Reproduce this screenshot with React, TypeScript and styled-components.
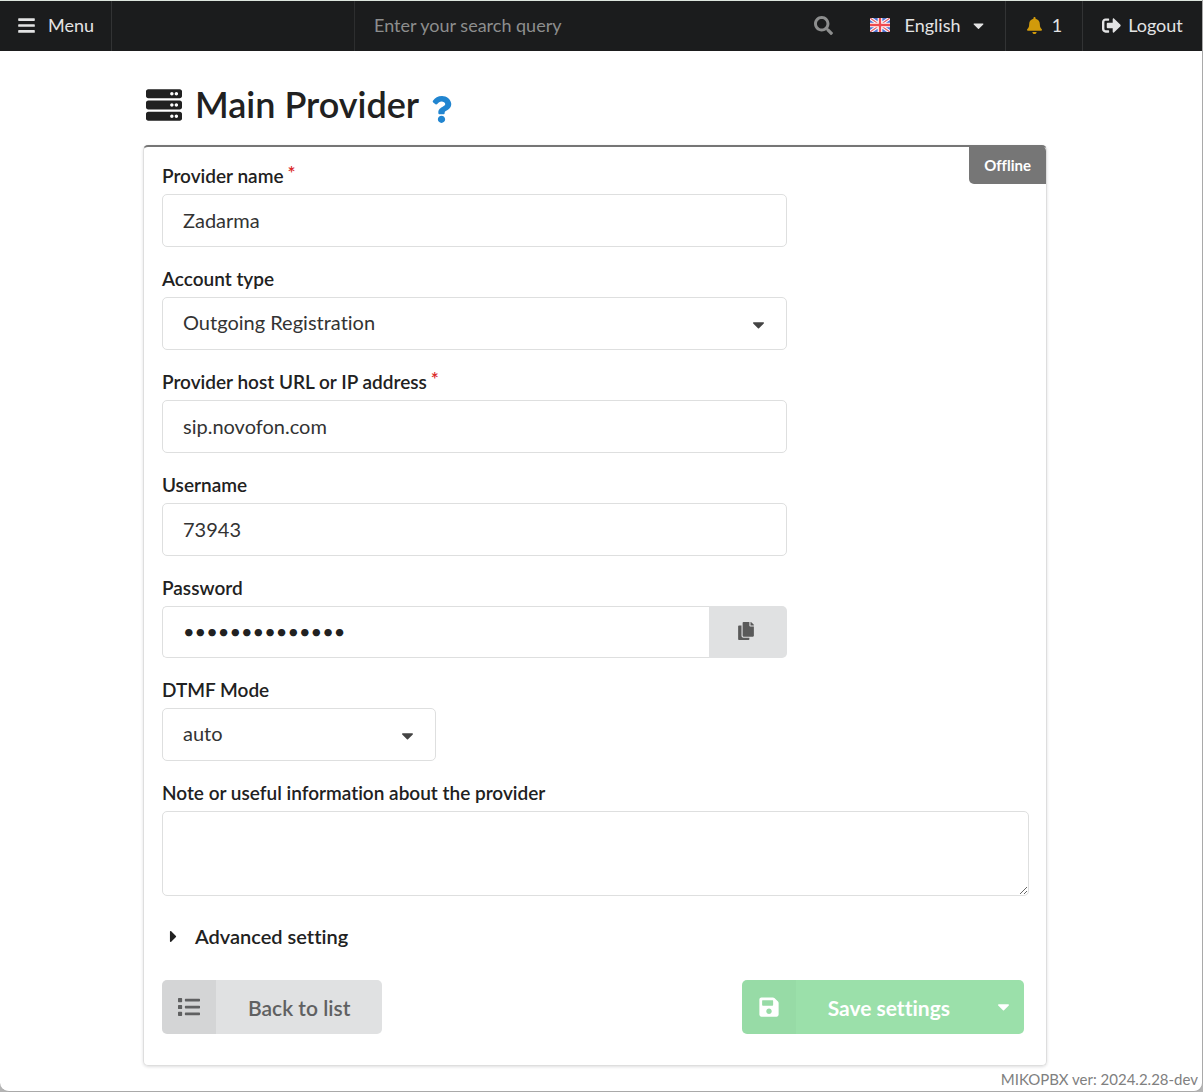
import React from "react";
import styled, { createGlobalStyle } from "styled-components";
import {
  FaBars,
  FaBell,
  FaCaretDown,
  FaCaretRight,
  FaCopy,
  FaList,
  FaQuestion,
  FaSave,
  FaSearch,
  FaServer,
  FaSignOutAlt,
} from "react-icons/fa";

const GlobalStyle = createGlobalStyle`
  *, *::before, *::after { box-sizing: border-box; }
  body {
    margin: 0;
    background: #b4b4b4;
    color: #212121;
    font-family: Lato, "Liberation Sans", sans-serif;
    font-size: 20px;
    font-variant-ligatures: none;
  }
  button, input, select, textarea { font: inherit; font-variant-ligatures: none; color: inherit; margin: 0; }
  svg { display: block; flex: none; }
`;

const Page = styled.div`
  display: flex;
  flex-direction: column;
  min-height: 100vh;
  background: #fff;
  border: solid #a9a9a9;
  border-width: 0 1px 1px 0;
  border-radius: 0 0 9px 9px;
`;

const TopBar = styled.nav`
  display: flex;
  height: 51px;
  border-top: 1px solid #dde5dd;
  background: #1b1c1d;
  color: #e3e3e4;
  font-size: 18px;
`;

const NavButton = styled.button<{ $width: number; $gap: number; $divided?: boolean }>`
  display: flex;
  align-items: center;
  justify-content: center;
  gap: ${(p) => p.$gap}px;
  width: ${(p) => p.$width}px;
  padding: 0 0 2px;
  border: 0;
  border-right: ${(p) => (p.$divided ? "1px solid #323334" : "0")};
  background: none;
  cursor: pointer;
`;

const NavSpacer = styled.div`
  width: 243px;
  border-right: 1px solid #2d2e2f;
`;

const SearchBox = styled.label`
  display: flex;
  flex: 1;
  align-items: center;
  padding: 0 19px 2px;
  color: #8d8e8e;
`;

const SearchInput = styled.input`
  flex: 1;
  min-width: 0;
  padding: 0;
  border: 0;
  outline: 0;
  background: none;
  &::placeholder { color: #8d8e8e; opacity: 1; }
`;

const FlagIcon = styled.svg`
  margin-right: 5px;
`;

const Main = styled.main`
  width: 100%;
  padding: 30px 155px 0 143px;
`;

const Heading = styled.header`
  display: flex;
  align-items: center;
  height: 48px;
  padding-left: 3px;
  gap: 13px;
`;

const Title = styled.h1`
  margin: 0;
  padding-bottom: 2px;
  font-size: 36px;
  line-height: 46px;
  font-weight: 600;
`;

const HelpLink = styled.a`
  margin-left: -4px;
  padding-top: 8px;
  color: #2185d0;
`;

const Card = styled.section`
  margin-top: 16px;
  padding: 17px 17px 31px 18px;
  border: 1px solid #dedede;
  border-top: 2px solid #767676;
  border-radius: 5px;
  box-shadow: 0 1px 3px rgba(34, 36, 38, 0.15);
  position: relative;
`;

const StatusBadge = styled.span`
  position: absolute;
  top: -1px;
  right: 0;
  padding: 9px 15px;
  border-radius: 0 5px 0 5px;
  background: #767676;
  color: #fff;
  font-size: 15px;
  line-height: 20px;
  font-weight: 700;
`;

const Form = styled.form`
  display: flex;
  flex-direction: column;
  gap: 20px;
`;

const Field = styled.div<{ $maxWidth?: string }>`
  display: flex;
  flex-direction: column;
  width: 100%;
  max-width: ${(p) => p.$maxWidth ?? "625px"};
`;

const Label = styled.label`
  height: 30px;
  font-size: 19px;
  line-height: 24px;
  font-weight: 600;
`;

const Required = styled.span`
  margin-left: 4px;
  color: #db2828;
  line-height: 18px;
  vertical-align: top;
`;

const TextInput = styled.input`
  width: 100%;
  height: 53px;
  padding: 0 20px 2px;
  border: 1px solid #dedfdf;
  border-radius: 5px;
  outline: 0;
  background: #fff;
  color: #333;
`;

const SelectBox = styled.div`
  position: relative;
`;

const Select = styled.select`
  width: 100%;
  height: 53px;
  padding: 0 50px 4px 20px;
  border: 1px solid #dedfdf;
  border-radius: 5px;
  outline: 0;
  background: #fff;
  color: #333;
  appearance: none;
`;

const SelectCaret = styled(FaCaretDown)`
  position: absolute;
  right: 19px;
  top: 18px;
  color: #444;
  pointer-events: none;
`;

const ActionInput = styled.div`
  display: flex;
  height: 52px;
`;

const PasswordInput = styled(TextInput)`
  flex: 1;
  height: 52px;
  border-right: 0;
  border-radius: 5px 0 0 5px;
  color: #212121;
`;

const CopyButton = styled.button`
  display: flex;
  align-items: center;
  justify-content: center;
  width: 78px;
  padding: 0 4px 2px 0;
  border: 0;
  border-radius: 0 5px 5px 0;
  background: #e0e1e2;
  color: #5a5a5a;
`;

const NoteArea = styled.textarea`
  display: block;
  width: 100%;
  height: 85px;
  padding: 14px 20px;
  border: 1px solid #dedfdf;
  border-radius: 5px;
  outline: 0;
  resize: vertical;
`;

const AdvancedToggle = styled.button`
  display: flex;
  align-items: center;
  align-self: flex-start;
  gap: 12px;
  height: 44px;
  padding: 0 0 4px 2px;
  border: 0;
  background: none;
  font-weight: 600;
`;

const Actions = styled.div`
  display: flex;
  justify-content: space-between;
  padding-right: 5px;
`;

const ActionButton = styled.button<{ $primary?: boolean }>`
  display: flex;
  align-items: center;
  height: 54px;
  padding: 0;
  overflow: hidden;
  border: 0;
  border-radius: 5px;
  background: ${(p) => (p.$primary ? "#9be0aa" : "#e0e1e2")};
  color: ${(p) => (p.$primary ? "#fff" : "#5f6061")};
  font-size: 21px;
  font-weight: ${(p) => (p.$primary ? 700 : 600)};
`;

const ButtonIcon = styled.span`
  display: flex;
  align-items: center;
  justify-content: center;
  width: 54px;
  height: 100%;
  background: rgba(0, 0, 0, 0.05);
`;

const SaveIconCell = styled(ButtonIcon)`
  background: rgba(0, 0, 0, 0.02);
`;

const ButtonText = styled.span`
  padding: 0 32px;
`;

const SaveGroup = styled.div`
  display: flex;
  & > button:first-child { border-radius: 5px 0 0 5px; }
`;

const SaveMenuButton = styled.button`
  display: flex;
  align-items: center;
  justify-content: center;
  width: 42px;
  padding: 0 0 2px;
  border: 0;
  border-radius: 0 5px 5px 0;
  background: #9be0aa;
  color: #fff;
`;

const Footer = styled.footer`
  margin-top: auto;
  padding: 0 4px 1px 0;
  color: #808080;
  font-size: 15px;
  line-height: 22px;
  text-align: right;
`;

function UnitedKingdomFlag() {
  return (
    <FlagIcon width="20" height="14" viewBox="0 0 60 42" aria-hidden="true">
      <rect width="60" height="42" fill="#4f70d0" />
      <path d="M0 0L60 42M60 0L0 42" stroke="#fff" strokeWidth="10" />
      <path d="M0 0L60 42M60 0L0 42" stroke="#e3646c" strokeWidth="4" />
      <path d="M30 0V42M0 21H60" stroke="#fff" strokeWidth="14" />
      <path d="M30 0V42M0 21H60" stroke="#ee4a50" strokeWidth="7" />
    </FlagIcon>
  );
}

interface SelectFieldProps {
  id: string;
  label: string;
  options: string[];
  maxWidth?: string;
}

function SelectField({ id, label, options, maxWidth }: SelectFieldProps) {
  return (
    <Field $maxWidth={maxWidth}>
      <Label htmlFor={id}>{label}</Label>
      <SelectBox>
        <Select id={id}>
          {options.map((option) => (
            <option key={option}>{option}</option>
          ))}
        </Select>
        <SelectCaret size={19} />
      </SelectBox>
    </Field>
  );
}

interface TextFieldProps {
  id: string;
  label: string;
  value: string;
  required?: boolean;
}

function TextField({ id, label, value, required }: TextFieldProps) {
  return (
    <Field>
      <Label htmlFor={id}>
        {label}
        {required && <Required>*</Required>}
      </Label>
      <TextInput id={id} type="text" defaultValue={value} />
    </Field>
  );
}

export default function App() {
  return (
    <>
      <GlobalStyle />
      <Page>
        <TopBar>
          <NavButton $width={112} $gap={12} $divided>
            <FaBars size={19} />
            Menu
          </NavButton>
          <NavSpacer />
          <SearchBox>
            <SearchInput aria-label="Search" placeholder="Enter your search query" />
            <FaSearch size={19} />
          </SearchBox>
          <NavButton $width={154} $gap={10} $divided>
            <UnitedKingdomFlag />
            English
            <FaCaretDown size={17} />
          </NavButton>
          <NavButton $width={77} $gap={9} $divided>
            <FaBell size={17} color="#d19a0b" />1
          </NavButton>
          <NavButton $width={119} $gap={7}>
            <FaSignOutAlt size={19} />
            Logout
          </NavButton>
        </TopBar>
        <Main>
          <Heading>
            <FaServer size={36} />
            <Title>Main Provider</Title>
            <HelpLink href="#help" aria-label="Help">
              <FaQuestion size={27} />
            </HelpLink>
          </Heading>
          <Card>
            <StatusBadge>Offline</StatusBadge>
            <Form onSubmit={(event) => event.preventDefault()}>
              <TextField id="name" label="Provider name" value="Zadarma" required />
              <SelectField id="type" label="Account type" options={["Outgoing Registration"]} />
              <TextField id="host" label="Provider host URL or IP address" value="sip.novofon.com" required />
              <TextField id="username" label="Username" value="73943" />
              <Field>
                <Label htmlFor="password">Password</Label>
                <ActionInput>
                  <PasswordInput id="password" type="password" defaultValue="secretpassword" />
                  <CopyButton type="button" aria-label="Copy password">
                    <FaCopy size={18} />
                  </CopyButton>
                </ActionInput>
              </Field>
              <SelectField id="dtmf" label="DTMF Mode" options={["auto"]} maxWidth="274px" />
              <Field $maxWidth="none">
                <Label htmlFor="note">Note or useful information about the provider</Label>
                <NoteArea id="note" />
              </Field>
              <AdvancedToggle type="button">
                <FaCaretRight size={19} />
                Advanced setting
              </AdvancedToggle>
              <Actions>
                <ActionButton type="button">
                  <ButtonIcon>
                    <FaList size={22} />
                  </ButtonIcon>
                  <ButtonText>Back to list</ButtonText>
                </ActionButton>
                <SaveGroup>
                  <ActionButton type="submit" $primary>
                    <SaveIconCell>
                      <FaSave size={22} />
                    </SaveIconCell>
                    <ButtonText>Save settings</ButtonText>
                  </ActionButton>
                  <SaveMenuButton type="button" aria-label="More save options">
                    <FaCaretDown size={19} />
                  </SaveMenuButton>
                </SaveGroup>
              </Actions>
            </Form>
          </Card>
        </Main>
        <Footer>MIKOPBX ver: 2024.2.28-dev</Footer>
      </Page>
    </>
  );
}
